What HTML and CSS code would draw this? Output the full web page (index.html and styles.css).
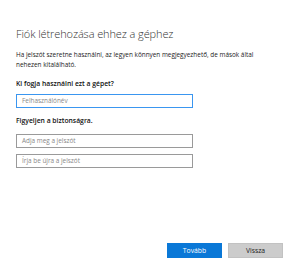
FILE: index.html
```html
<!DOCTYPE html>
<html lang="hu">
<head>
<meta charset="utf-8">
<link rel="stylesheet" href="styles.css">
</head>
<body>
<div class="page">
  <h1 class="title">Fiók létrehozása ehhez a géphez</h1>
  <p class="desc">Ha jelszót szeretne használni, az legyen könnyen megjegyezhető, de mások által nehezen kitalálható.</p>
  <div class="label">Ki fogja használni ezt a gépet?</div>
  <div class="field focus">Felhasználónév</div>
  <div class="label sec">Figyeljen a biztonságra.</div>
  <div class="field pw">Adja meg a jelszót</div>
  <div class="field pw">Írja be újra a jelszót</div>
  <div class="spacer"></div>
  <div class="buttons">
    <div class="btn primary">Tovább</div>
    <div class="btn">Vissza</div>
  </div>
</div>
</body>
</html>
```
FILE: styles.css
```css
html, body {
  margin: 0;
  padding: 0;
  background: #ffffff;
}
.page {
  width: 300px;
  height: 276px;
  box-sizing: border-box;
  padding: 27px 17px 18px 16px;
  display: flex;
  flex-direction: column;
  font-family: "Open Sans", "Noto Sans", sans-serif;
  color: #222;
}
.title {
  margin: 0;
  font-size: 11px;
  font-weight: 300;
  line-height: 14px;
  color: #333;
  letter-spacing: -0.1px;
}
.desc {
  margin: 9px 0 0 0;
  font-size: 6.4px;
  line-height: 10px;
  color: #222;
  width: 262px;
}
.label {
  margin-top: 9px;
  font-size: 6.8px;
  line-height: 10px;
  font-weight: 600;
  color: #111;
}
.label.sec {
  margin-top: 8px;
}
.field {
  margin-top: 5px;
  width: 177px;
  height: 14px;
  box-sizing: border-box;
  border: 1px solid #9a9a9a;
  font-size: 6.4px;
  line-height: 12px;
  padding-left: 5px;
  color: #888;
}
.field.focus {
  border-color: #3a96f0;
}
.field.pw {
  margin-top: 8px;
}
.field.pw + .field.pw {
  margin-top: 6px;
}
.spacer {
  flex: 1;
}
.buttons {
  display: flex;
  justify-content: flex-end;
  gap: 6px;
}
.btn {
  width: 55px;
  height: 15px;
  box-sizing: border-box;
  background: #cccccc;
  border: 1px solid #c2c2c2;
  font-size: 6.8px;
  line-height: 13px;
  text-align: center;
  color: #222;
}
.btn.primary {
  background: #0a78d7;
  border-color: #0a78d7;
  color: #fff;
}
```
